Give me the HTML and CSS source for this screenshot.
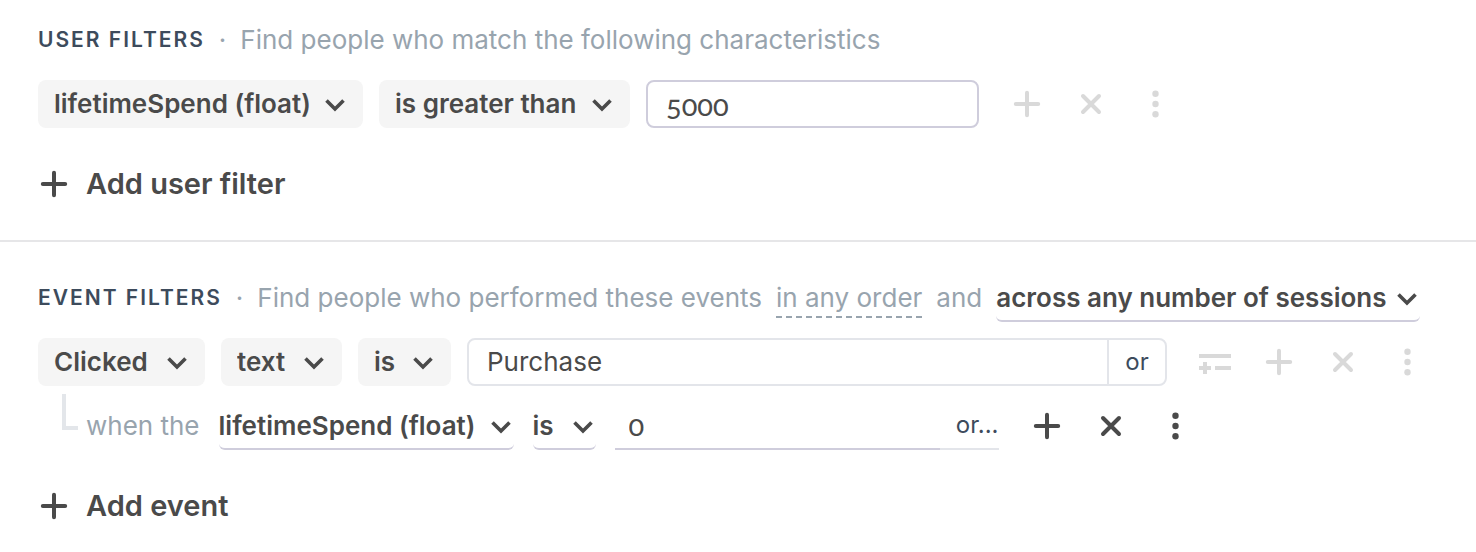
FILE: index.html
```html
<!DOCTYPE html>
<html lang="en">
<head>
    <meta charset="UTF-8">
    <meta name="viewport" content="width=device-width, initial-scale=1.0">
    <title>Filters</title>
    <link rel="stylesheet" href="styles.css">
</head>
<body>
    <!-- Shared icons -->
    <svg class="sprite" aria-hidden="true">
        <symbol id="icon-plus" viewBox="0 0 32 32"><path d="M16 4.800v22.400M4.800 16h22.400" stroke="currentColor" stroke-width="4" stroke-linecap="round"/></symbol>
        <symbol id="icon-close" viewBox="0 0 32 32"><path d="M8 8l16 16M24 8L8 24" stroke="currentColor" stroke-width="4" stroke-linecap="round"/></symbol>
        <symbol id="icon-more" viewBox="0 0 32 32"><g fill="currentColor"><circle cx="16.500" cy="5.700" r="3.200"/><circle cx="16.500" cy="16" r="3.200"/><circle cx="16.500" cy="26.300" r="3.200"/></g></symbol>
        <symbol id="icon-refine" viewBox="0 0 32 32"><path d="M0 10h32M16 22h16M0 22h12M6 16v12" stroke="currentColor" stroke-width="4"/></symbol>
        <symbol id="icon-chevron" viewBox="0 0 20 14"><path d="M1.500 2.500L10 11l8.500-8.500" fill="none" stroke="currentColor" stroke-width="3.600"/></symbol>
    </svg>

    <section class="filters user-filters">
        <div class="filters-header">
            <h2 class="title">USER FILTERS</h2>
            <span class="dot">·</span>
            <p class="hint">Find people who match the following characteristics</p>
        </div>
        <div class="filter-row">
            <div class="dropdown chip property">
                <select aria-label="User property"><option>lifetimeSpend (float)</option></select>
                <svg class="chevron"><use href="#icon-chevron"/></svg>
            </div>
            <div class="dropdown chip comparison">
                <select aria-label="Comparison"><option>is greater than</option></select>
                <svg class="chevron"><use href="#icon-chevron"/></svg>
            </div>
            <input class="text-input numeric" type="text" value="5000" aria-label="Value">
            <div class="actions">
                <button class="icon-button muted" aria-label="Add"><svg><use href="#icon-plus"/></svg></button>
                <button class="icon-button muted" aria-label="Remove"><svg><use href="#icon-close"/></svg></button>
                <button class="icon-button muted" aria-label="More"><svg><use href="#icon-more"/></svg></button>
            </div>
        </div>
        <button class="add-button"><svg><use href="#icon-plus"/></svg>Add user filter</button>
    </section>

    <section class="filters event-filters">
        <div class="filters-header">
            <h2 class="title">EVENT FILTERS</h2>
            <span class="dot">·</span>
            <p class="hint">Find people who performed these events</p>
            <button class="order-toggle">in any order</button>
            <span class="hint">and</span>
            <div class="dropdown underlined sessions">
                <select aria-label="Sessions"><option>across any number of sessions</option></select>
                <svg class="chevron"><use href="#icon-chevron"/></svg>
            </div>
        </div>
        <div class="filter-row">
            <div class="dropdown chip event">
                <select aria-label="Event"><option>Clicked</option></select>
                <svg class="chevron"><use href="#icon-chevron"/></svg>
            </div>
            <div class="dropdown chip field">
                <select aria-label="Event field"><option>text</option></select>
                <svg class="chevron"><use href="#icon-chevron"/></svg>
            </div>
            <div class="dropdown chip operator">
                <select aria-label="Operator"><option>is</option></select>
                <svg class="chevron"><use href="#icon-chevron"/></svg>
            </div>
            <div class="input-group">
                <input type="text" value="Purchase" aria-label="Event value">
                <button class="or-button">or</button>
            </div>
            <div class="actions">
                <button class="icon-button muted" aria-label="Refine"><svg><use href="#icon-refine"/></svg></button>
                <button class="icon-button muted" aria-label="Add"><svg><use href="#icon-plus"/></svg></button>
                <button class="icon-button muted" aria-label="Remove"><svg><use href="#icon-close"/></svg></button>
                <button class="icon-button muted" aria-label="More"><svg><use href="#icon-more"/></svg></button>
            </div>
        </div>
        <div class="filter-row condition">
            <span class="hint">when the</span>
            <div class="dropdown underlined condition-property">
                <select aria-label="Condition property"><option>lifetimeSpend (float)</option></select>
                <svg class="chevron"><use href="#icon-chevron"/></svg>
            </div>
            <div class="dropdown underlined condition-operator">
                <select aria-label="Condition operator"><option>is</option></select>
                <svg class="chevron"><use href="#icon-chevron"/></svg>
            </div>
            <div class="line-group">
                <input class="numeric" type="text" value="0" aria-label="Condition value">
                <button class="or-button">or...</button>
            </div>
            <div class="actions">
                <button class="icon-button" aria-label="Add"><svg><use href="#icon-plus"/></svg></button>
                <button class="icon-button" aria-label="Remove"><svg><use href="#icon-close"/></svg></button>
                <button class="icon-button" aria-label="More"><svg><use href="#icon-more"/></svg></button>
            </div>
        </div>
        <button class="add-button"><svg><use href="#icon-plus"/></svg>Add event</button>
    </section>
</body>
</html>
```
FILE: styles.css
```css
* {
    box-sizing: border-box;
}

body {
    margin: 0;
    background-color: #fff;
    color: #4a4a4a;
    font-family: Inter, "Liberation Sans", sans-serif;
    font-size: 26px;
    line-height: 32px;
}

button,
input,
select {
    margin: 0;
    padding: 0;
    border: none;
    background: none;
    color: inherit;
    font: inherit;
}

button,
select {
    cursor: pointer;
}

.sprite {
    display: none;
}

/* Sections */
.filters {
    padding: 32px 53px 22px 38px;
}

.user-filters {
    padding-top: 16px;
    padding-bottom: 32px;
    border-bottom: 2px solid #e6e6e8;
}

.filters-header {
    display: flex;
    align-items: center;
    gap: 14px;
    height: 48px;
    margin-bottom: 16px;
    white-space: nowrap;
}

.title {
    margin: 0;
    color: #3d4b5c;
    font-size: 21px;
    font-weight: 600;
    letter-spacing: 2px;
}

.dot,
.hint,
.order-toggle {
    margin: 0;
    color: #98a4ae;
}

.order-toggle {
    padding: 4px 0 2px;
    border-bottom: 2px dashed #98a4ae;
}

/* Rows */
.filter-row {
    display: flex;
    align-items: center;
    gap: 16px;
}

.condition {
    position: relative;
    gap: 19px;
    margin-top: 16px;
    padding-left: 48px;
}

/* Line that ties the condition to its event */
.condition::before {
    content: "";
    position: absolute;
    left: 24px;
    top: -8px;
    width: 12px;
    height: 32px;
    border-left: 4px solid #e3e6ea;
    border-bottom: 4px solid #e3e6ea;
}

/* Drop-downs */
.dropdown {
    position: relative;
    flex: none;
    height: 48px;
}

.dropdown select {
    width: 100%;
    height: 100%;
    appearance: none;
    font-weight: 600;
}

.chevron {
    position: absolute;
    right: 18px;
    top: 18px;
    width: 20px;
    height: 14px;
    pointer-events: none;
}

.chip select {
    padding-left: 16px;
    border-radius: 8px;
    background-color: #f5f5f5;
}

.underlined select {
    padding-top: 2px;
    border-bottom: 2px solid #cfcddc;
    border-radius: 6px;
}

.underlined .chevron {
    right: 3px;
}

.property {
    width: 325px;
}

.comparison {
    width: 251px;
}

.sessions {
    width: 424px;
}

.event {
    width: 167px;
}

.field {
    width: 121px;
}

.operator {
    width: 93px;
}

.condition-property {
    width: 295px;
}

.condition-operator {
    width: 63px;
}

/* Text boxes */
input {
    min-width: 0;
}

.numeric {
    font-family: Lato, Inter, sans-serif;
    font-size: 29px;
    font-variant-numeric: oldstyle-nums;
}

.text-input {
    width: 333px;
    height: 48px;
    padding: 0 18px;
    border: 2px solid #cfcddc;
    border-radius: 8px;
}

.input-group {
    display: flex;
    flex: 1;
    height: 48px;
    border: 2px solid #e3e5ea;
    border-radius: 8px;
}

.input-group input {
    flex: 1;
    padding: 0 18px;
}

.or-button {
    color: #3d4b5c;
    font-size: 24px;
}

.input-group .or-button {
    width: 58px;
    border-left: 2px solid #e3e5ea;
}

.line-group {
    display: flex;
    width: 384px;
    height: 48px;
}

.line-group input {
    flex: 1;
    padding: 0 14px;
    border-bottom: 2px solid #cfcddc;
}

.line-group .or-button {
    width: 59px;
    border-bottom: 2px solid #e3e5ea;
    text-align: right;
}

/* Buttons */
.actions {
    display: flex;
    gap: 32px;
    margin-left: 16px;
}

.condition .actions {
    margin-left: 13px;
}

.icon-button {
    width: 32px;
    height: 32px;
}

.icon-button svg,
.add-button svg {
    display: block;
    width: 32px;
    height: 32px;
}

.muted {
    color: #d9d9d9;
}

.add-button {
    display: flex;
    align-items: center;
    gap: 16px;
    height: 48px;
    margin-top: 32px;
    font-size: 29px;
    font-weight: 600;
}
```
